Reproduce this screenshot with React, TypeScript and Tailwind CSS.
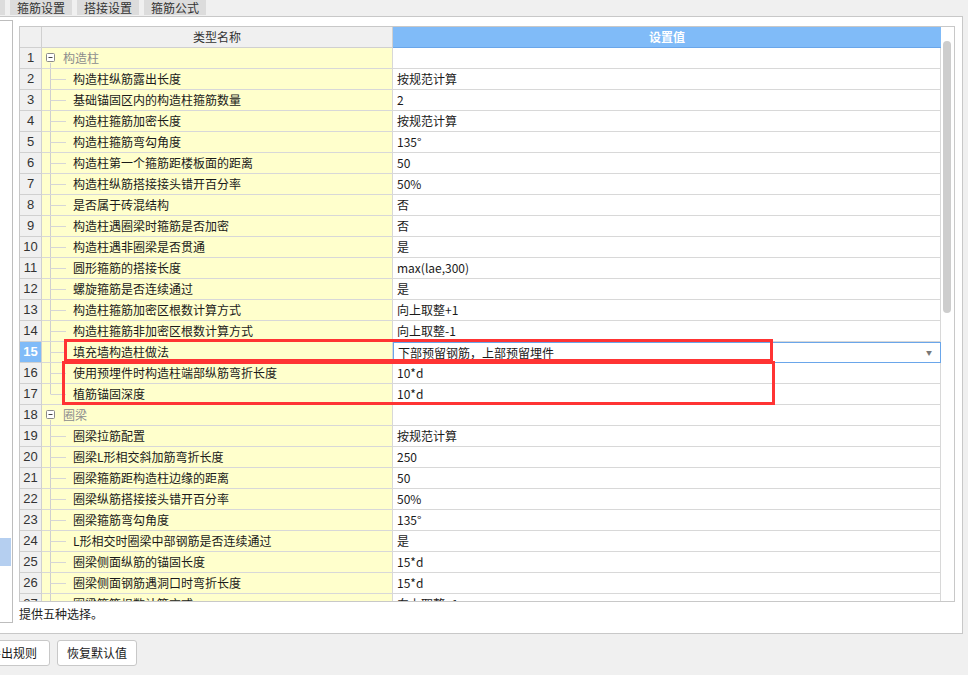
import React from 'react';

type Row = { n: number; name: string; value?: string; group?: boolean; last?: boolean };

const rows: Row[] = [
  { n: 1, name: '构造柱', group: true },
  { n: 2, name: '构造柱纵筋露出长度', value: '按规范计算' },
  { n: 3, name: '基础锚固区内的构造柱箍筋数量', value: '2' },
  { n: 4, name: '构造柱箍筋加密长度', value: '按规范计算' },
  { n: 5, name: '构造柱箍筋弯勾角度', value: '135°' },
  { n: 6, name: '构造柱第一个箍筋距楼板面的距离', value: '50' },
  { n: 7, name: '构造柱纵筋搭接接头错开百分率', value: '50%' },
  { n: 8, name: '是否属于砖混结构', value: '否' },
  { n: 9, name: '构造柱遇圈梁时箍筋是否加密', value: '否' },
  { n: 10, name: '构造柱遇非圈梁是否贯通', value: '是' },
  { n: 11, name: '圆形箍筋的搭接长度', value: 'max(lae,300)' },
  { n: 12, name: '螺旋箍筋是否连续通过', value: '是' },
  { n: 13, name: '构造柱箍筋加密区根数计算方式', value: '向上取整+1' },
  { n: 14, name: '构造柱箍筋非加密区根数计算方式', value: '向上取整-1' },
  { n: 15, name: '填充墙构造柱做法', value: '下部预留钢筋，上部预留埋件' },
  { n: 16, name: '使用预埋件时构造柱端部纵筋弯折长度', value: '10*d' },
  { n: 17, name: '植筋锚固深度', value: '10*d', last: true },
  { n: 18, name: '圈梁', group: true },
  { n: 19, name: '圈梁拉筋配置', value: '按规范计算' },
  { n: 20, name: '圈梁L形相交斜加筋弯折长度', value: '250' },
  { n: 21, name: '圈梁箍筋距构造柱边缘的距离', value: '50' },
  { n: 22, name: '圈梁纵筋搭接接头错开百分率', value: '50%' },
  { n: 23, name: '圈梁箍筋弯勾角度', value: '135°' },
  { n: 24, name: 'L形相交时圈梁中部钢筋是否连续通过', value: '是' },
  { n: 25, name: '圈梁侧面纵筋的锚固长度', value: '15*d' },
  { n: 26, name: '圈梁侧面钢筋遇洞口时弯折长度', value: '15*d' },
  { n: 27, name: '圈梁箍筋根数计算方式', value: '向上取整+1' },
];

const TreeMark = ({ row }: { row: Row }) => {
  if (row.group) {
    return (
      <svg width="21" height="20" className="shrink-0">
        <line x1="8.5" y1="15" x2="8.5" y2="20" stroke="#cfcfcf" />
        <rect x="4.5" y="5.5" width="8" height="8" rx="1" fill="#fff" stroke="#8a8a8a" />
        <line x1="6.5" y1="9.5" x2="10.5" y2="9.5" stroke="#444" />
      </svg>
    );
  }
  return (
    <svg width="31" height="20" className="shrink-0">
      <line x1="8.5" y1="0" x2="8.5" y2={row.last ? 10 : 20} stroke="#cfcfcf" />
      <line x1="8.5" y1="10.5" x2="24" y2="10.5" stroke="#d6d6d6" />
    </svg>
  );
};

export default function App() {
  return (
    <div className="w-[968px] h-[675px] overflow-hidden bg-[#f0f0f0] text-[12px] text-[#1a1a1a] font-['Noto_Sans_CJK_SC','Liberation_Sans',sans-serif] relative">
      {/* tabs */}
      <div className="h-[16px] flex items-start gap-[5px] ml-[-57px]">
        {['纵筋设置', '箍筋设置', '搭接设置', '箍筋公式'].map(t => (
          <div key={t} className="h-[15px] bg-[#dcdcdc] text-[#333] leading-[15px] w-[62px] text-center">{t}</div>
        ))}
      </div>

      {/* main panel */}
      <div className="w-[963px] h-[618px] bg-white border border-l-0 border-[#c8c8c8] flex">
        <div className="w-[13px] h-[603px] mt-[3px] border-y border-r border-[#bdbdbd] shrink-0 flex flex-col">
          <div className="h-[517px]" />
          <div className="h-[28px] w-[11px] bg-[#b5cff0]" />
        </div>

        <div className="ml-[6px] mt-[9px] flex flex-col">
          <div className="w-[936px] h-[576px] border border-[#c8c8c8] flex overflow-hidden relative">
            <div className="w-[921px] flex flex-col">
              {/* header */}
              <div className="flex h-[21px] shrink-0">
                <div className="w-[22px] bg-[#f0f0f0] border-r border-b border-[#d0d0d0]" />
                <div className="w-[351px] bg-[#f0f0f0] border-r border-b border-[#d0d0d0] flex items-center justify-center text-[#333]">类型名称</div>
                <div className="w-[548px] bg-[#80bbf8] border-b border-[#6aa6ea] flex items-center justify-center text-white font-bold">设置值</div>
              </div>
              {rows.map(r => {
                const active = r.n === 15;
                return (
                  <div key={r.n} className="flex h-[21px] shrink-0">
                    <div className={`w-[22px] border-r border-b border-[#d0d0d0] flex items-center justify-center text-[13px] font-['Liberation_Sans',sans-serif] ${active ? 'bg-[#80bbf8] text-white font-bold' : 'bg-[#f0f0f0] text-[#333]'}`}>{r.n}</div>
                    <div className="w-[351px] bg-[#ffffcc] border-r border-b border-[#d8d8d8] flex items-center whitespace-nowrap overflow-hidden">
                      <TreeMark row={r} />
                      <span className={r.group ? 'text-[#8c8c8c]' : ''}>{r.name}</span>
                    </div>
                    <div className={`w-[548px] border-b flex items-center pl-[4px] pr-[8px] justify-between ${active ? 'border border-[#6aa6ea] pl-[3px]' : 'border-r border-[#d8d8d8]'}`}>
                      <span>{r.value}</span>
                      {active && <span className="text-[6px] text-[#777]">▼</span>}
                    </div>
                  </div>
                );
              })}
            </div>
            {/* scrollbar */}
            <div className="flex-1 pl-[2px] pt-[14px]">
              <div className="w-[8px] h-[272px] rounded-full bg-[#cdcdcd]" />
            </div>

            {/* red annotation boxes */}
            <div className="absolute left-[44px] top-[312px] w-[709px] h-[23px] border-[3px] border-[#ff3434]" />
            <div className="absolute left-[42px] top-[334px] w-[713px] h-[44px] border-[3px] border-[#ff3434]" />
          </div>
          <div className="mt-[2px] leading-[20px] text-[#222]">提供五种选择。</div>
        </div>
      </div>

      {/* bottom buttons */}
      <div className="flex gap-[7px] mt-[6px] ml-[-24px]">
        <div className="h-[26px] px-[12px] bg-white border border-[#c8c8c8] rounded-[3px] flex items-center">导出规则</div>
        <div className="h-[26px] w-[80px] bg-white border border-[#c8c8c8] rounded-[3px] flex items-center justify-center">恢复默认值</div>
      </div>
    </div>
  );
}
